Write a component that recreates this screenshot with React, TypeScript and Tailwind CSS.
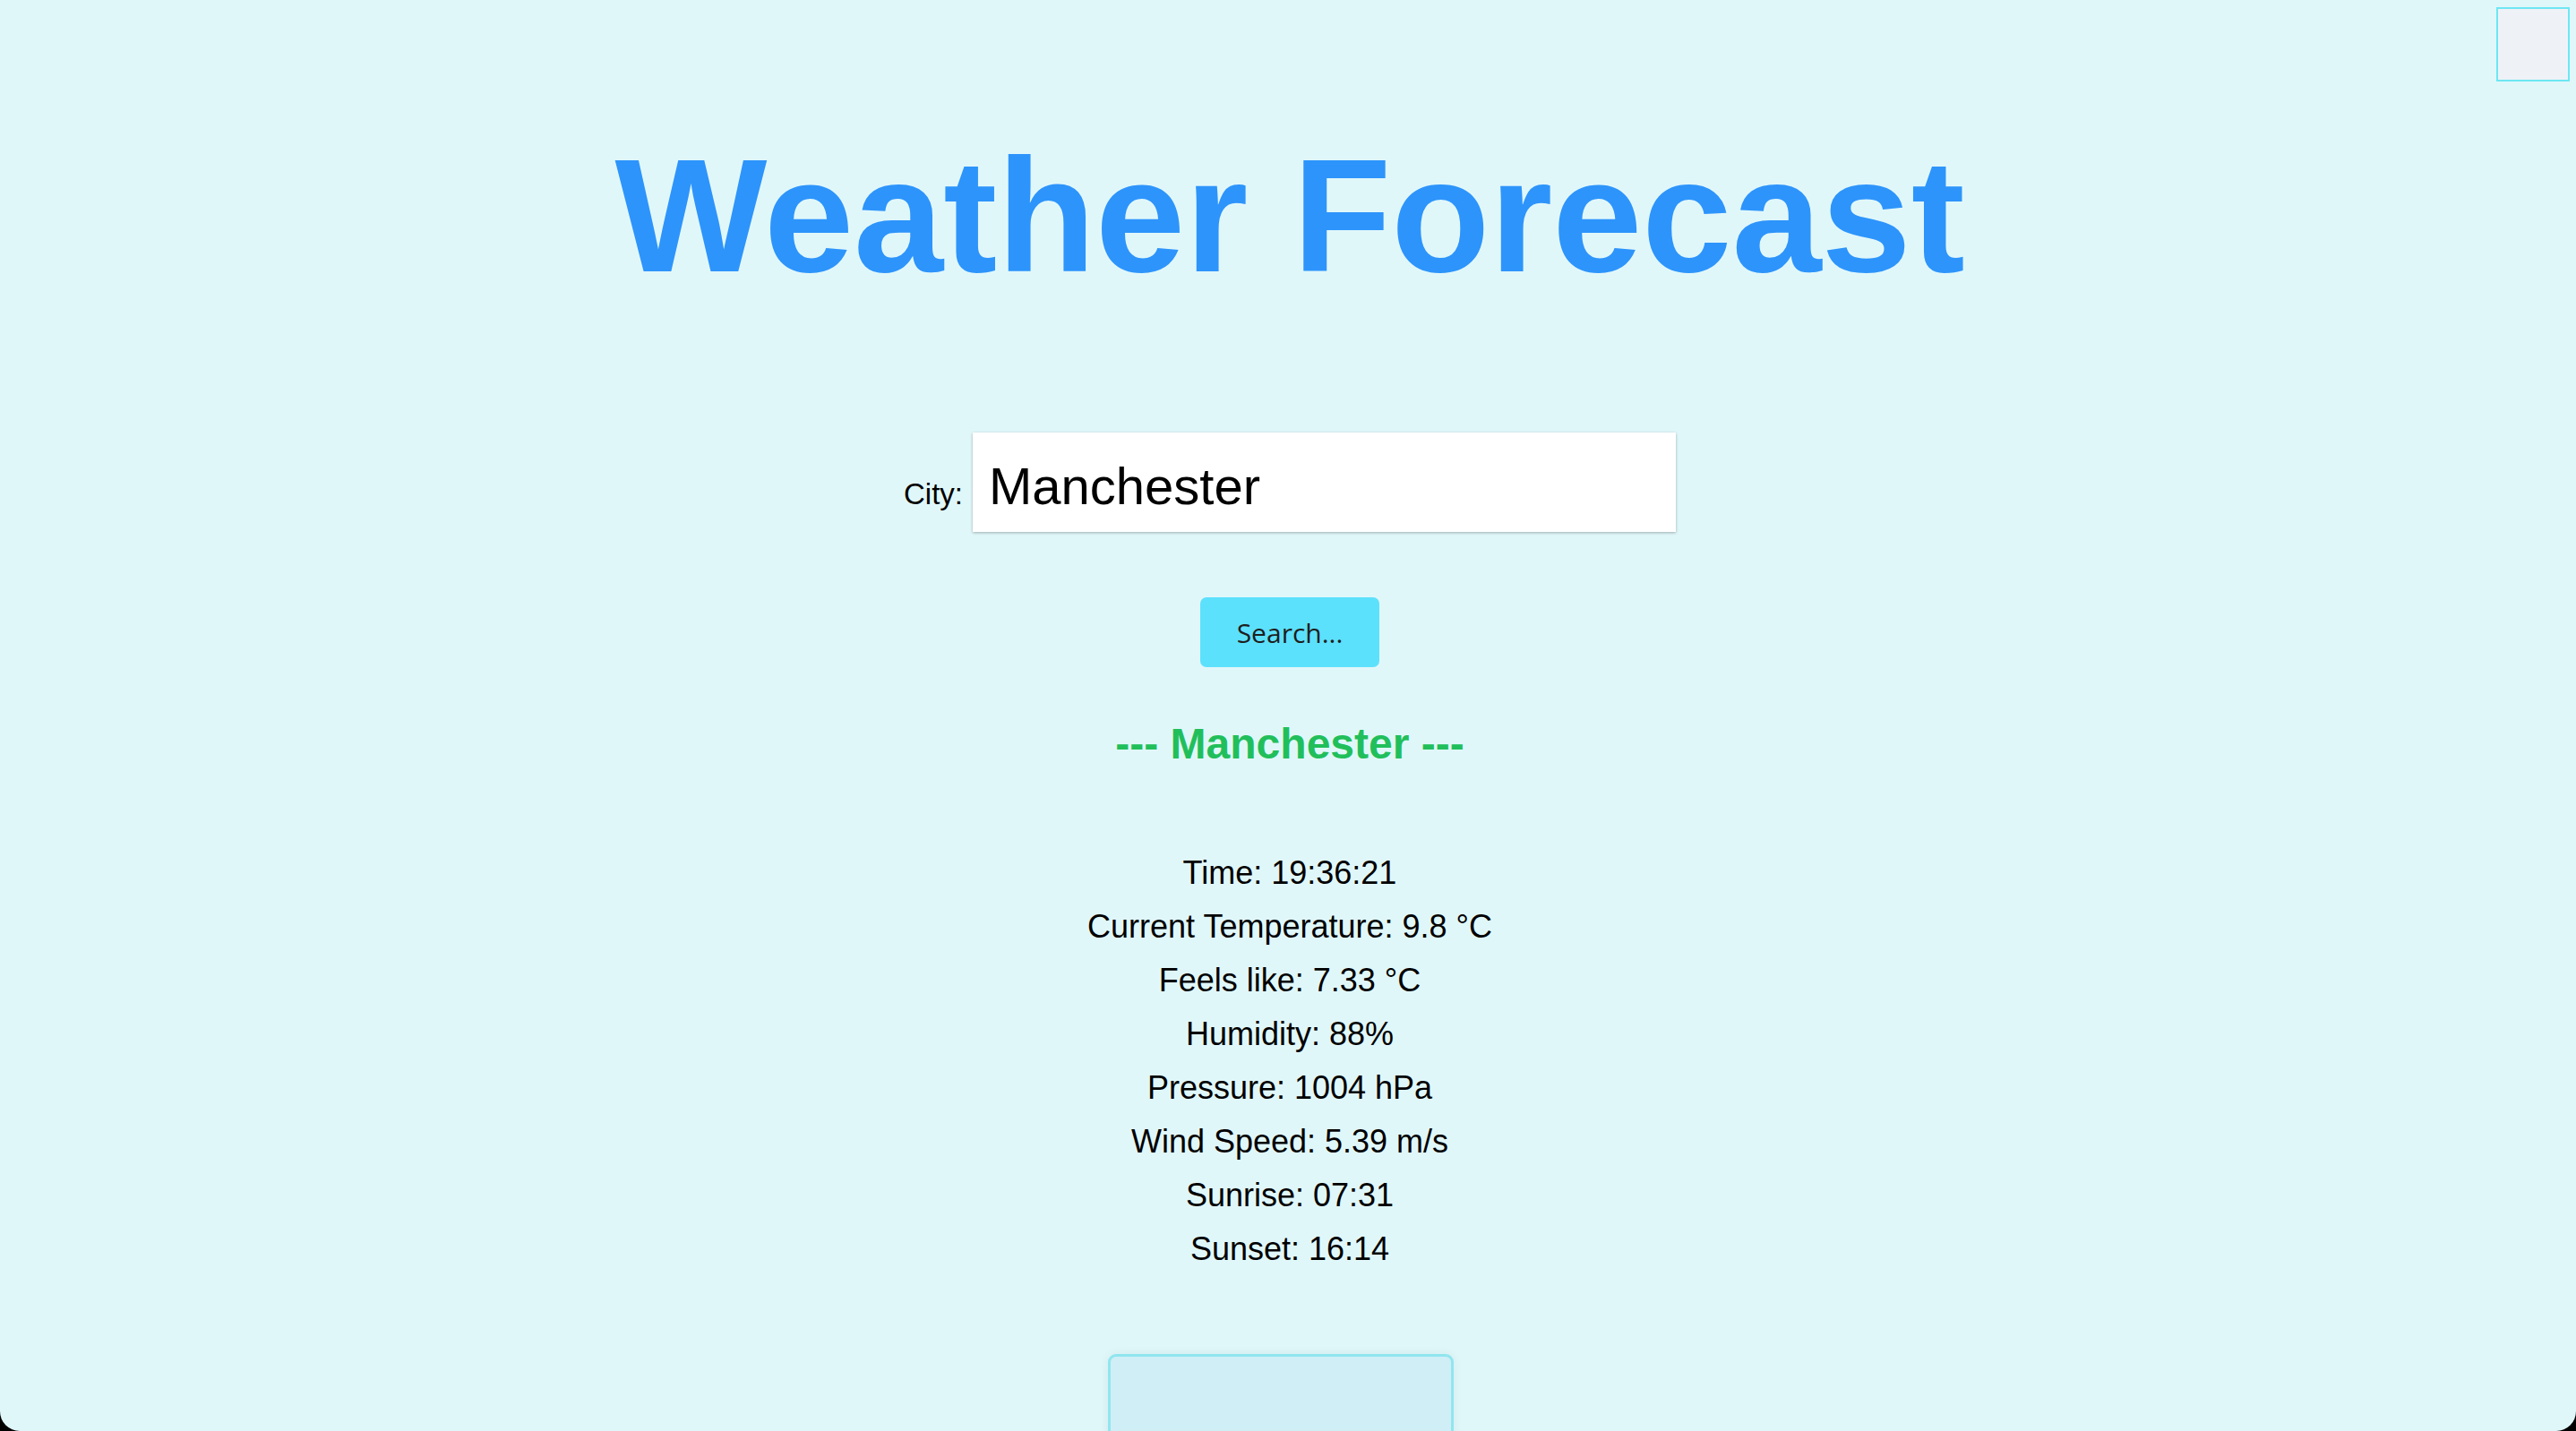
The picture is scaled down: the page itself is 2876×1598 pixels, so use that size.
import React from 'react';

const details = [
  'Time: 19:36:21',
  'Current Temperature: 9.8 °C',
  'Feels like: 7.33 °C',
  'Humidity: 88%',
  'Pressure: 1004 hPa',
  'Wind Speed: 5.39 m/s',
  'Sunrise: 07:31',
  'Sunset: 16:14',
];

const App: React.FC = () => {
  return (
    <div className="bg-black">
      <div className="relative h-[1598px] overflow-hidden rounded-b-[22px] bg-[#e0f7fa] font-['Liberation_Sans',Arial,sans-serif] text-black">
        {/* top-right toggle */}
        <div className="absolute right-[7px] top-[8px] h-[83px] w-[82px] border-2 border-[#6ee7f3] bg-[#eef2f6]" />

        <div className="flex flex-col items-center pl-[4px] pt-[151px]">
          <h1 className="text-[180px] font-bold leading-[180px] text-[#2d94fb]">Weather Forecast</h1>

          <div className="mt-[152px] flex items-baseline gap-[11px]">
            <label className="text-[33px]">City:</label>
            <input
              className="h-[111px] w-[785px] bg-white px-[18px] pt-[8px] text-[58px] text-black shadow-[0_1px_3px_rgba(0,0,0,0.3)] outline-none"
              defaultValue="Manchester"
            />
          </div>

          <button className="mt-[73px] h-[78px] w-[200px] rounded-[7px] bg-[#5ce1fc] font-['Open_Sans',sans-serif] text-[30px] text-[#1e1e1e]">
            Search...
          </button>

          <h2 className="mt-[58px] text-[48px] font-bold leading-[56px] text-[#21bf5b]">--- Manchester ---</h2>

          <div className="mt-[86px] flex flex-col items-center">
            {details.map(line => (
              <p key={line} className="text-[36px] leading-[60px]">
                {line}
              </p>
            ))}
          </div>

          <div className="mr-[20px] mt-[87px] h-[220px] w-[386px] rounded-[9px] border-[3px] border-[#90e6ee] bg-[#d0eef6] shadow-[0_0_12px_rgba(0,0,0,0.06)]" />
        </div>
      </div>
    </div>
  );
};

export default App;
